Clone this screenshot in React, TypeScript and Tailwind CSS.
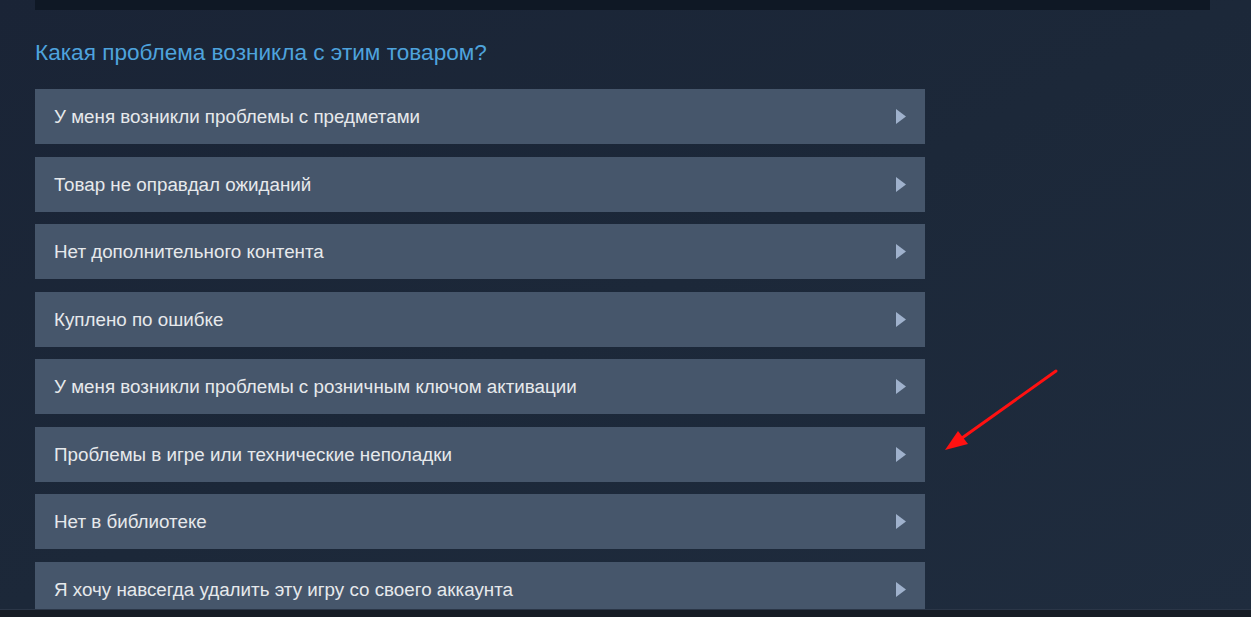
import React from 'react'

const reasons = [
  'У меня возникли проблемы с предметами',
  'Товар не оправдал ожиданий',
  'Нет дополнительного контента',
  'Куплено по ошибке',
  'У меня возникли проблемы с розничным ключом активации',
  'Проблемы в игре или технические неполадки',
  'Нет в библиотеке',
  'Я хочу навсегда удалить эту игру со своего аккаунта',
]

const Arrow: React.FC = () => (
  <svg width="10" height="15" viewBox="0 0 10 15" className="shrink-0">
    <polygon points="0,0 10,7.5 0,15" fill="#9fb1cc" />
  </svg>
)

export default function App() {
  return (
    <div
      className="relative h-[617px] w-[1251px] overflow-hidden bg-gradient-to-br from-[#1a2436] via-[#1c2839] to-[#1f2c3e]"
      style={{ fontFamily: '"Liberation Sans", Arial, sans-serif' }}
    >
      <div className="mx-[35px] mr-[41px] h-[10px] bg-[#0f1825]" />

      <div className="px-[35px]">
        <h2 className="mt-[30px] text-[22.6px] leading-[26px] text-[#4ea3dd]">
          Какая проблема возникла с этим товаром?
        </h2>

        <div className="mt-[23px] flex w-[890px] flex-col gap-[12.5px]">
          {reasons.map((r) => (
            <div
              key={r}
              className="flex h-[55px] shrink-0 items-center justify-between bg-[#46566b] pl-[19px] pr-[19px] text-[18.8px] text-[#e6e9ec]"
            >
              <span className="pt-[2px]">{r}</span>
              <Arrow />
            </div>
          ))}
        </div>
      </div>

      {/* red annotation arrow */}
      <svg className="absolute left-[940px] top-[365px]" width="125" height="92" viewBox="0 0 125 92">
        <line x1="116" y1="6" x2="15" y2="78" stroke="#ff1111" strokeWidth="3" strokeLinecap="round" />
        <polygon points="5,85 18,66 28,79" fill="#ff1111" />
      </svg>

      <div className="absolute bottom-0 left-0 right-0 h-[8px] border-t border-[#2b3647] bg-[#171d25]" />
    </div>
  )
}
